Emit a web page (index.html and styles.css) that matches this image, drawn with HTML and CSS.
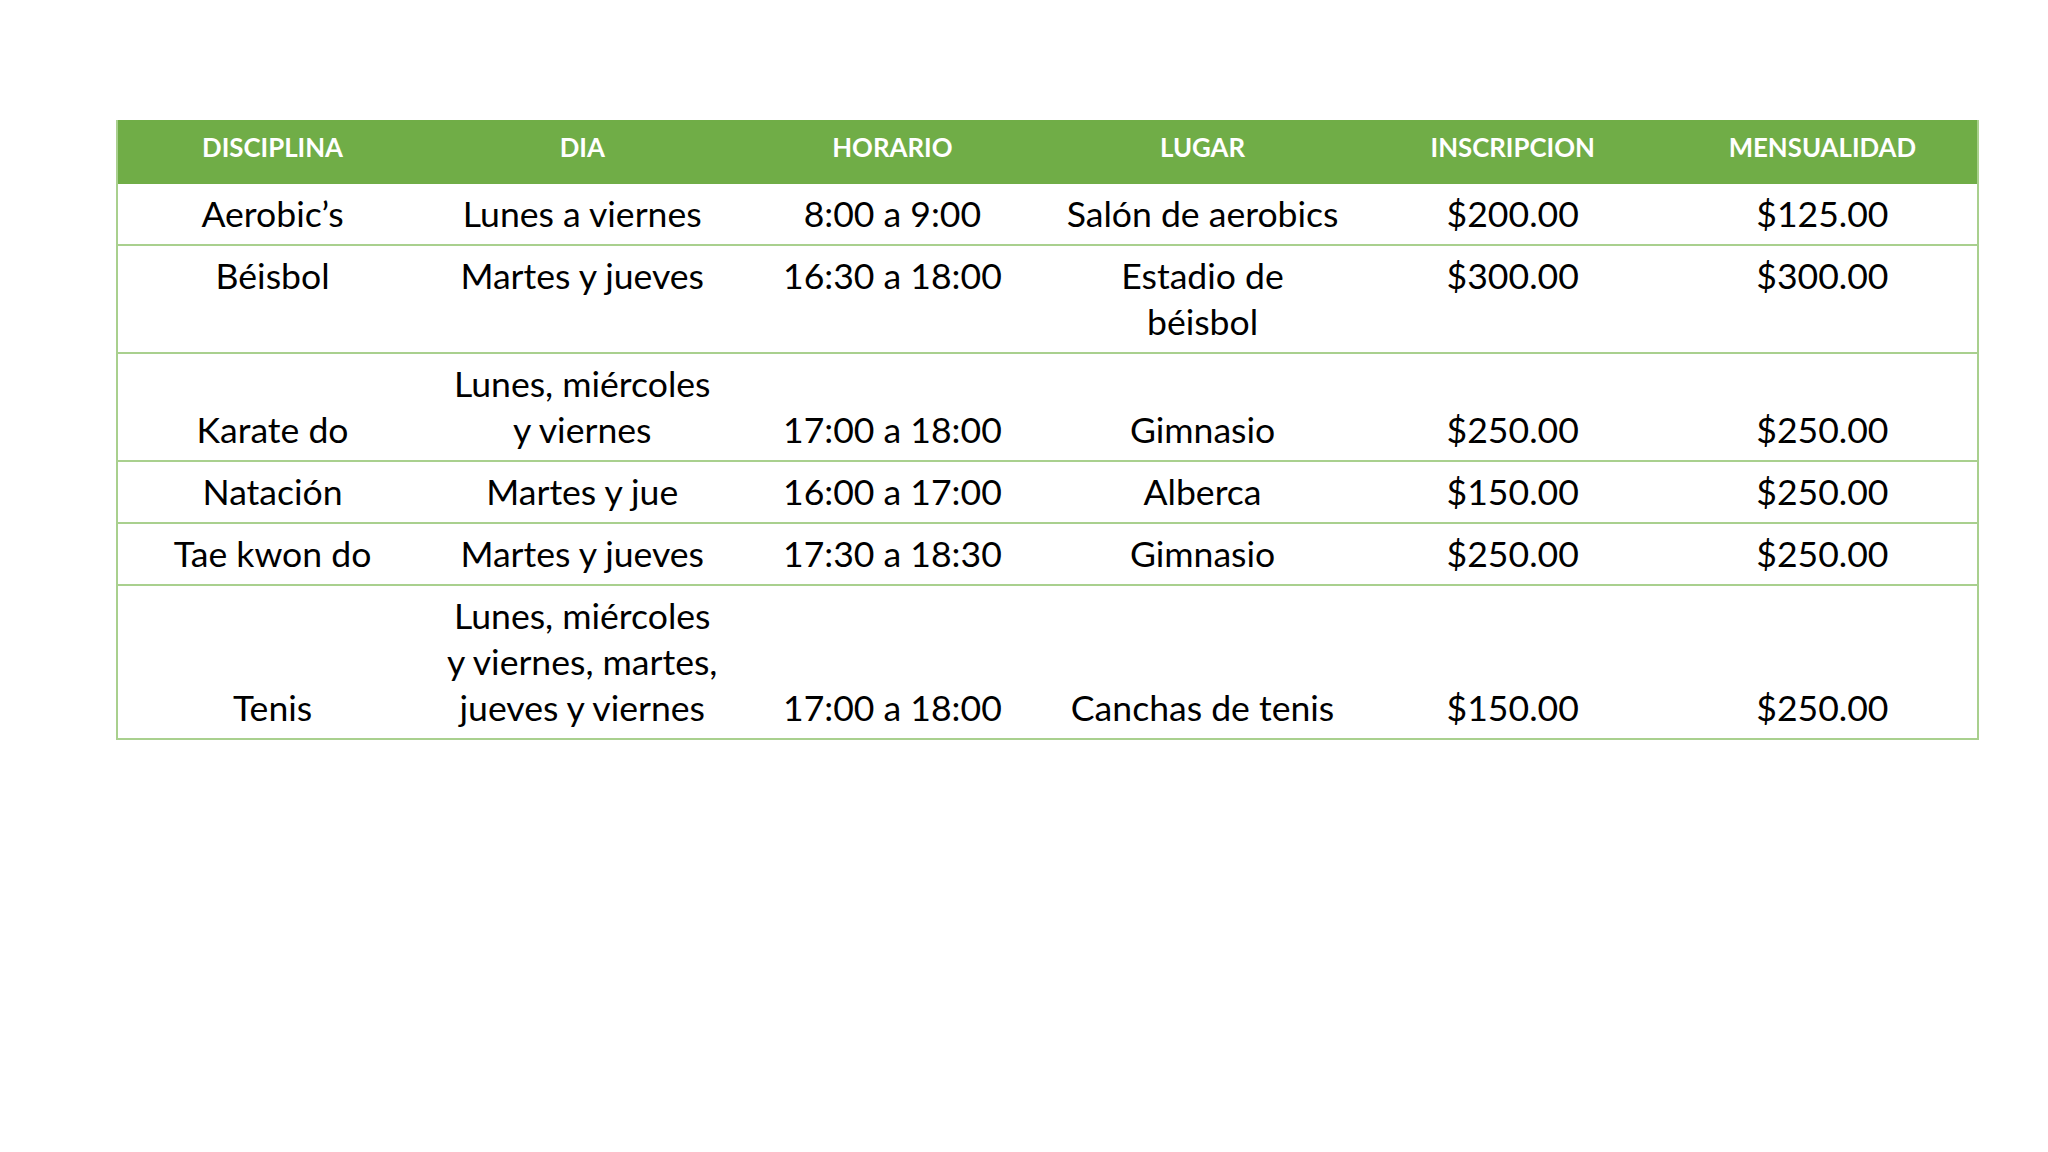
FILE: index.html
```html
<!DOCTYPE html>
<html lang="es">
<head>
<meta charset="utf-8">
<title>Disciplinas</title>
<link rel="stylesheet" href="styles.css">
</head>
<body>
<table class="schedule">
  <thead>
    <tr>
      <th>DISCIPLINA</th>
      <th>DIA</th>
      <th>HORARIO</th>
      <th>LUGAR</th>
      <th>INSCRIPCION</th>
      <th>MENSUALIDAD</th>
    </tr>
  </thead>
  <tbody>
    <tr>
      <td>Aerobic’s</td>
      <td>Lunes a viernes</td>
      <td>8:00 a 9:00</td>
      <td>Salón de aerobics</td>
      <td>$200.00</td>
      <td>$125.00</td>
    </tr>
    <tr class="top">
      <td>Béisbol</td>
      <td>Martes y jueves</td>
      <td>16:30 a 18:00</td>
      <td>Estadio de<br>béisbol</td>
      <td>$300.00</td>
      <td>$300.00</td>
    </tr>
    <tr class="bottom">
      <td>Karate do</td>
      <td>Lunes, miércoles<br>y viernes</td>
      <td>17:00 a 18:00</td>
      <td>Gimnasio</td>
      <td>$250.00</td>
      <td>$250.00</td>
    </tr>
    <tr>
      <td>Natación</td>
      <td>Martes y jue</td>
      <td>16:00 a 17:00</td>
      <td>Alberca</td>
      <td>$150.00</td>
      <td>$250.00</td>
    </tr>
    <tr>
      <td>Tae kwon do</td>
      <td>Martes y jueves</td>
      <td>17:30 a 18:30</td>
      <td>Gimnasio</td>
      <td>$250.00</td>
      <td>$250.00</td>
    </tr>
    <tr class="bottom">
      <td>Tenis</td>
      <td>Lunes, miércoles<br>y viernes, martes,<br>jueves y viernes</td>
      <td>17:00 a 18:00</td>
      <td>Canchas de tenis</td>
      <td>$150.00</td>
      <td>$250.00</td>
    </tr>
  </tbody>
</table>
</body>
</html>
```

FILE: styles.css
```css
html, body {
  margin: 0;
  padding: 0;
  background: #ffffff;
}

body {
  width: 2048px;
  height: 1152px;
  overflow: hidden;
  font-family: Lato, "Open Sans", "Liberation Sans", sans-serif;
}

.schedule {
  margin-top: 120px;
  margin-left: 116px;
  width: 1863px;
  border-collapse: collapse;
  table-layout: fixed;
  border-left: 2px solid #a9d08e;
  border-right: 2px solid #a9d08e;
  border-bottom: 2px solid #a9d08e;
}

.schedule th {
  background: #70ad47;
  color: #ffffff;
  font-weight: 700;
  font-size: 25.8px;
  line-height: 46px;
  padding: 4px 4px 14px;
  text-align: center;
  vertical-align: middle;
}

.schedule td {
  font-size: 35.6px;
  line-height: 46px;
  color: #000000;
  text-align: center;
  padding: 7px 4px 7px;
  border-top: 2px solid #a9d08e;
  vertical-align: middle;
}

.schedule thead + tbody tr:first-child td {
  border-top: none;
}

.schedule tr.top td {
  vertical-align: top;
}

.schedule tr.bottom td {
  vertical-align: bottom;
}
```
